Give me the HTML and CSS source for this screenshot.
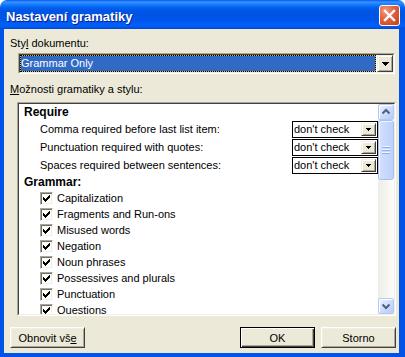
FILE: index.html
```html
<!DOCTYPE html>
<html lang="cs">

<head>
    <meta charset="UTF-8">
    <meta name="viewport" content="width=device-width, initial-scale=1.0">
    <title>Nastavení gramatiky</title>
    <link rel="stylesheet" href="styles.css">
</head>

<body>
    <svg class="sprite" xmlns="http://www.w3.org/2000/svg">
        <symbol id="chk" viewBox="0 0 7 7">
            <path d="M6 0h1v1h-1z M5 1h2v1h-2z M0 2h1v1h-1z M4 2h3v1h-3z M0 3h2v1h-2z M3 3h3v1h-3z M0 4h5v1h-5z M1 5h3v1h-3z M2 6h1v1h-1z" />
        </symbol>
        <symbol id="tri" viewBox="0 0 7 4">
            <path d="M0 0h7v1h-7z M1 1h5v1h-5z M2 2h3v1h-3z M3 3h1v1h-1z" />
        </symbol>
        <symbol id="tri-s" viewBox="0 0 5 3">
            <path d="M0 0h5v1h-5z M1 1h3v1h-3z M2 2h1v1h-1z" />
        </symbol>
    </svg>

    <div class="window">
        <div class="titlebar">
            <span class="title">Nastavení gramatiky</span>
            <button class="close">
                <svg width="19" height="19" viewBox="0 0 19 19">
                    <path d="M5 5 L14 14 M14 5 L5 14" stroke="#fff" stroke-width="2.4" stroke-linecap="square" fill="none" />
                </svg>
            </button>
        </div>

        <div class="frame">
            <div class="label">Sty<u>l</u> dokumentu:</div>
            <div class="combo">
                <div class="combo-in">
                    <div class="combo-value">Grammar Only</div>
                    <div class="drop-btn"><svg width="7" height="4"><use href="#tri" /></svg></div>
                </div>
            </div>

            <div class="label label-gap"><u>M</u>ožnosti gramatiky a stylu:</div>
            <div class="list">
                <div class="list-inner">
                    <div class="rows">
                        <div class="row head">Require</div>
                        <div class="row opt">
                            <span>Comma required before last list item:</span>
                            <div class="mini"><span>don't check</span><div class="mini-btn"><svg width="5" height="3"><use href="#tri-s" /></svg></div></div>
                        </div>
                        <div class="row opt">
                            <span>Punctuation required with quotes:</span>
                            <div class="mini"><span>don't check</span><div class="mini-btn"><svg width="5" height="3"><use href="#tri-s" /></svg></div></div>
                        </div>
                        <div class="row opt">
                            <span>Spaces required between sentences:</span>
                            <div class="mini"><span>don't check</span><div class="mini-btn"><svg width="5" height="3"><use href="#tri-s" /></svg></div></div>
                        </div>
                        <div class="row head">Grammar:</div>
                        <div class="row check"><span class="box"><svg width="7" height="7"><use href="#chk" /></svg></span>Capitalization</div>
                        <div class="row check"><span class="box"><svg width="7" height="7"><use href="#chk" /></svg></span>Fragments and Run-ons</div>
                        <div class="row check"><span class="box"><svg width="7" height="7"><use href="#chk" /></svg></span>Misused words</div>
                        <div class="row check"><span class="box"><svg width="7" height="7"><use href="#chk" /></svg></span>Negation</div>
                        <div class="row check"><span class="box"><svg width="7" height="7"><use href="#chk" /></svg></span>Noun phrases</div>
                        <div class="row check"><span class="box"><svg width="7" height="7"><use href="#chk" /></svg></span>Possessives and plurals</div>
                        <div class="row check"><span class="box"><svg width="7" height="7"><use href="#chk" /></svg></span>Punctuation</div>
                        <div class="row check"><span class="box"><svg width="7" height="7"><use href="#chk" /></svg></span>Questions</div>
                    </div>
                    <div class="scrollbar">
                        <div class="sb-btn">
                            <svg width="14" height="14" viewBox="0 0 14 14"><path d="M3.5 8.5 L7 5 L10.5 8.5" stroke="#4D6185" stroke-width="2" fill="none" /></svg>
                        </div>
                        <div class="sb-thumb">
                            <svg width="8" height="8" viewBox="0 0 8 8">
                                <rect y="0" width="8" height="1" fill="#EEF4FE" />
                                <rect y="1" width="8" height="1" fill="#8CB0F8" />
                                <rect y="3" width="8" height="1" fill="#EEF4FE" />
                                <rect y="4" width="8" height="1" fill="#8CB0F8" />
                                <rect y="6" width="8" height="1" fill="#EEF4FE" />
                                <rect y="7" width="8" height="1" fill="#8CB0F8" />
                            </svg>
                        </div>
                        <div class="sb-track"></div>
                        <div class="sb-btn">
                            <svg width="14" height="14" viewBox="0 0 14 14"><path d="M3.5 5.5 L7 9 L10.5 5.5" stroke="#4D6185" stroke-width="2" fill="none" /></svg>
                        </div>
                    </div>
                </div>
            </div>

            <div class="buttons">
                <button class="btn">Obnovit vš<u>e</u></button>
                <span class="spacer"></span>
                <button class="btn default">OK</button>
                <button class="btn">Storno</button>
            </div>
        </div>
    </div>
</body>

</html>
```

FILE: styles.css
```css
* {
    box-sizing: border-box;
}

body {
    margin: 0;
    background: #ffffff;
    font-family: "Liberation Sans", Arial, sans-serif;
    font-size: 11px;
    color: #000;
}

.sprite {
    display: none;
}

.window {
    width: 405px;
    height: 357px;
    display: flex;
    flex-direction: column;
    border-radius: 7px 7px 0 0;
    overflow: hidden;
}

.titlebar {
    height: 29px;
    flex: none;
    display: flex;
    justify-content: space-between;
    align-items: flex-start;
    padding: 0 5px 0 6px;
    background: linear-gradient(to bottom, #0058EE 0px, #3A93FF 2px, #1C80FF 4px, #0366F5 7px, #0057E5 10px, #0054E3 14px, #0055EB 20px, #0060FA 25px, #005AF0 27px, #0045CF 29px);
}

.title {
    margin-top: 9px;
    color: #fff;
    font-weight: bold;
    font-size: 13px;
    line-height: 15px;
    text-shadow: 1px 1px #0A1E8C;
}

.close {
    margin-top: 5px;
    width: 21px;
    height: 21px;
    padding: 0;
    border: 1px solid #fff;
    border-radius: 3px;
    background: radial-gradient(circle at 30% 25%, #F39A7E 0, #E2603C 45%, #C4401C 100%);
    display: flex;
}

.frame {
    flex: 1;
    background: #ECE9D8;
    border: solid #0053E6;
    border-width: 0 6px 4px 4px;
    padding: 8px 3px 5px 6px;
    display: flex;
    flex-direction: column;
}

.label {
    line-height: 13px;
}

.label-gap {
    margin-top: 9px;
}

.combo {
    margin: 3px 1px 0 8px;
    height: 21px;
    flex: none;
    border: 1px solid;
    border-color: #ACA899 #fff #fff #ACA899;
}

.combo-in {
    height: 100%;
    border: 1px solid;
    border-color: #404040 #F1EFE2 #F1EFE2 #404040;
    background: #fff;
    display: flex;
}

.combo-value {
    flex: 1;
    margin-right: 1px;
    border: 1px dotted #000;
    background: linear-gradient(#316AC5, #316AC5) padding-box, #E0B848;
    color: #fff;
    line-height: 15px;
}

.drop-btn {
    width: 16px;
    flex: none;
    border: 1px solid;
    border-color: #F1EFE2 #404040 #404040 #F1EFE2;
    box-shadow: inset 1px 1px #fff, inset -1px -1px #ACA899;
    background: #ECE9D8;
    display: flex;
    align-items: center;
    justify-content: center;
}

.list {
    margin: 6px 0 0 7px;
    height: 214px;
    flex: none;
    border: 1px solid;
    border-color: #ACA899 #fff #fff #ACA899;
}

.list-inner {
    height: 100%;
    border: 1px solid;
    border-color: #404040 #F1EFE2 #F1EFE2 #404040;
    background: #fff;
    display: flex;
}

.rows {
    flex: 1;
    overflow: hidden;
}

.row {
    display: flex;
    align-items: center;
    height: 16px;
    white-space: nowrap;
}

.head {
    font-weight: bold;
    font-size: 12px;
    padding-left: 5px;
}

.opt {
    height: 18px;
    padding-left: 21px;
    justify-content: space-between;
}

.check {
    padding-left: 21px;
}

.mini {
    width: 86px;
    height: 17px;
    border: 1px solid #000;
    padding: 1px;
    display: flex;
    align-items: center;
}

.mini span {
    flex: 1;
    line-height: 13px;
}

.mini-btn {
    width: 15px;
    height: 13px;
    border: 1px solid;
    border-color: #F1EFE2 #404040 #404040 #F1EFE2;
    box-shadow: inset 1px 1px #fff, inset -1px -1px #ACA899;
    background: #ECE9D8;
    display: flex;
    align-items: center;
    justify-content: center;
    padding-top: 1px;
}

.box {
    width: 13px;
    height: 13px;
    margin-right: 4px;
    flex: none;
    border: 1px solid;
    border-color: #ACA899 #fff #fff #ACA899;
    box-shadow: inset 1px 1px #716F64, inset -1px -1px #F1EFE2;
    background: #fff;
    display: flex;
    padding: 2px 0 0 2px;
}

.box svg {
    display: block;
}

.scrollbar {
    width: 16px;
    flex: none;
    display: flex;
    flex-direction: column;
    background: linear-gradient(to right, #EEEDE5, #FCFCFA);
}

.sb-btn {
    height: 16px;
    flex: none;
    border: 1px solid #B4C8F4;
    border-radius: 2px;
    background: linear-gradient(135deg, #F0F4FF 0%, #CCDAFC 55%, #B8CBF8 100%);
    box-shadow: inset 1px 1px #fff;
}

.sb-btn svg {
    display: block;
}

.sb-thumb {
    height: 60px;
    flex: none;
    border: 1px solid #A9BEEE;
    border-radius: 3px;
    background: linear-gradient(to right, #D3DFFD, #BED0FA);
    box-shadow: inset 1px 1px #F0F5FF;
    display: flex;
    align-items: center;
    justify-content: center;
}

.sb-track {
    flex: 1;
}

.buttons {
    margin-top: 11px;
    display: flex;
    gap: 6px;
}

.spacer {
    flex: 1;
}

.btn {
    width: 75px;
    height: 21px;
    padding: 0;
    font-family: "Liberation Sans", Arial, sans-serif;
    font-size: 11px;
    color: #000;
    background: #ECE9D8;
    border: 1px solid;
    border-color: #fff #404040 #404040 #fff;
    box-shadow: inset 1px 1px #F1EFE2, inset -1px -1px #ACA899;
}

.default {
    border-color: #000;
    box-shadow: inset 1px 1px #fff, inset -1px -1px #404040, inset -2px -2px #ACA899;
}
```
